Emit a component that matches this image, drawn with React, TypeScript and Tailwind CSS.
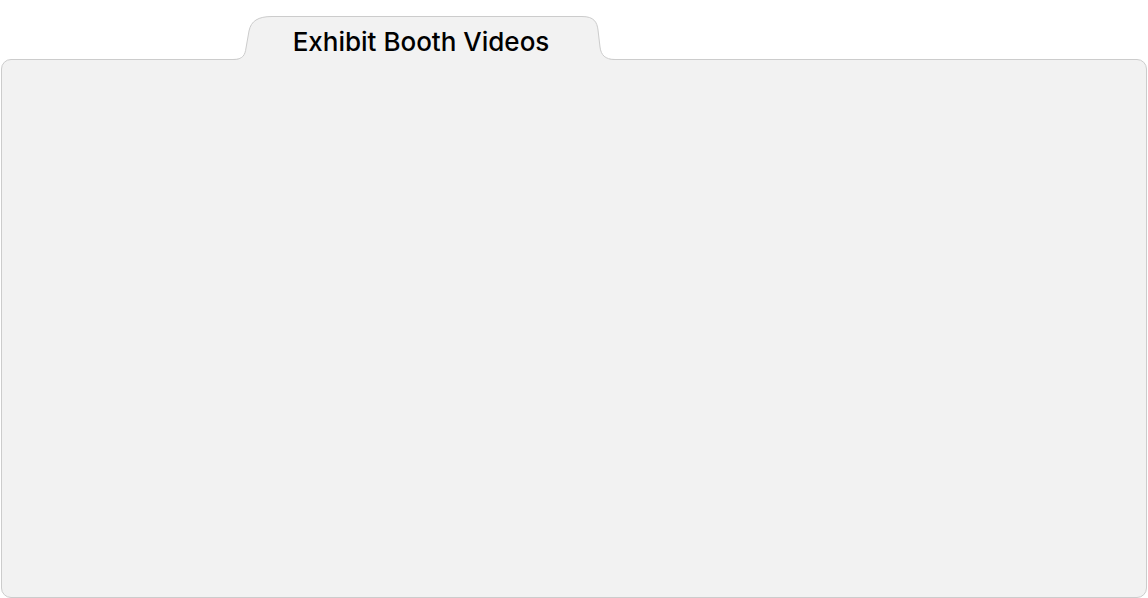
export default function App() {
  return (
    <div className="h-[598px] w-[1148px] bg-white pt-[15px] font-['Liberation_Sans',Arial,sans-serif]">
      <div className="relative z-10 ml-[233px] flex h-[44px] w-[384px] justify-center pr-[8px] pt-[14px]">
        <svg className="absolute left-0 top-0 -z-10 overflow-visible" width="384" height="47" viewBox="0 0 384 47">
          <path
            d="M2,44.5 C10,44.5 12,40 13,33 L16,16 C18,6 25,1.5 39,1.5 L349,1.5 C361,1.5 364,7 365,15 L367,32 C368,40 372,44.5 380,44.5 L380,48 L2,48 Z"
            fill="#f2f2f2"
          />
          <path
            d="M0,44.5 C10,44.5 12,40 13,33 L16,16 C18,6 25,1.5 39,1.5 L349,1.5 C361,1.5 364,7 365,15 L367,32 C368,40 372,44.5 382,44.5"
            fill="none"
            stroke="#cccccc"
            strokeWidth="1"
          />
        </svg>
        <h2 className="font-['Inter',sans-serif] text-[26px] font-medium leading-[26px] text-black">Exhibit Booth Videos</h2>
      </div>
      <div className="mx-px h-[539px] rounded-[10px] border border-[#cccccc] bg-[#f2f2f2]" />
    </div>
  );
}
